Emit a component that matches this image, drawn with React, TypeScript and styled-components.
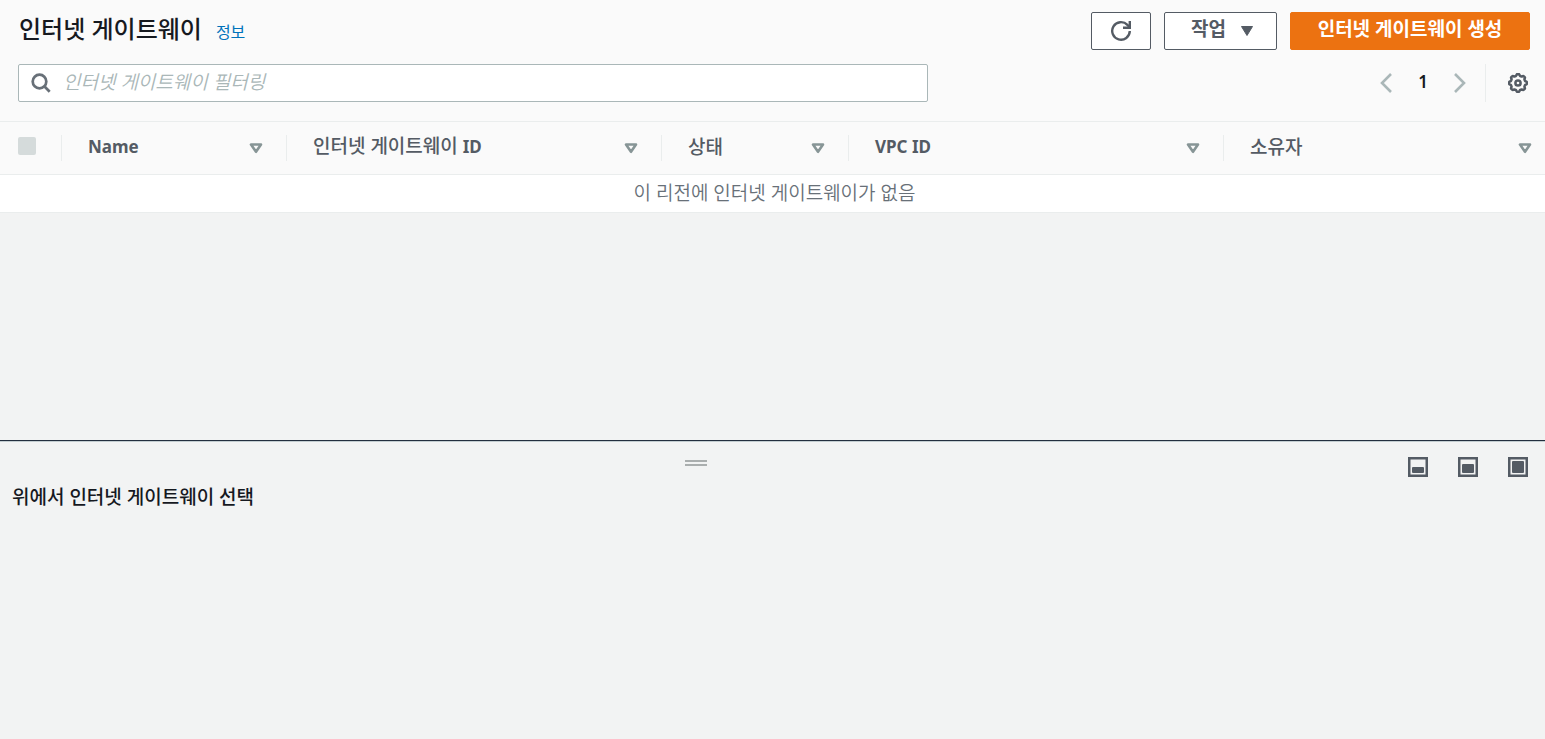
import React from "react";
import styled, { createGlobalStyle } from "styled-components";

const GlobalStyle = createGlobalStyle`
  *, *::before, *::after { box-sizing: border-box; }
  body {
    margin: 0;
    background: #f2f3f3;
    color: #16191f;
    font-family: "Noto Sans", "Noto Sans CJK KR", sans-serif;
    font-size: 19px;
    line-height: 24px;
  }
  button, input { font: inherit; color: inherit; }
`;

const Page = styled.div`
  display: flex;
  flex-direction: column;
  min-height: 100vh;
`;

const ListPane = styled.main`
  flex: 1;
`;

const ListHeader = styled.header`
  display: flex;
  flex-direction: column;
  gap: 14px;
  padding: 12px 15px 19px 18px;
  background: #fafafa;
`;

const HeaderRow = styled.div`
  display: flex;
  justify-content: space-between;
  height: 38px;
`;

const TitleGroup = styled.div`
  display: flex;
  align-items: baseline;
  gap: 14px;
  padding-left: 1px;
`;

const Title = styled.h1`
  margin: 0;
  font-size: 24px;
  line-height: 34px;
  font-weight: 500;
`;

const InfoLink = styled.a`
  color: #0073bb;
  font-size: 16px;
  text-decoration: none;
`;

const Actions = styled.div`
  display: flex;
  gap: 13px;
`;

const Button = styled.button<{ $primary?: boolean; $width: number }>`
  display: flex;
  align-items: center;
  justify-content: center;
  gap: 14px;
  width: ${(p) => p.$width}px;
  height: 38px;
  padding: 0;
  border: 1px solid ${(p) => (p.$primary ? "#ec7211" : "#545b64")};
  border-radius: 2px;
  background: ${(p) => (p.$primary ? "#ec7211" : "#fff")};
  color: ${(p) => (p.$primary ? "#fff" : "#545b64")};
  font-weight: 700;
`;

const ButtonText = styled.span`
  padding-bottom: 4px;
`;

const MenuButton = styled(Button)`
  padding-left: 4px;
`;

const SearchBox = styled.label`
  display: flex;
  align-items: center;
  gap: 12px;
  flex: 0 1 910px;
  min-width: 0;
  padding: 0 12px;
  border: 1px solid #aab7b8;
  border-radius: 2px;
  background: #fff;
  color: #687078;
`;

const SearchInput = styled.input`
  flex: 1;
  min-width: 0;
  padding: 0 0 3px;
  border: 0;
  outline: 0;
  background: transparent;
  &::placeholder {
    color: #aab7b8;
    font-style: italic;
    font-weight: 350;
    opacity: 1;
  }
`;

const Pagination = styled.nav`
  display: flex;
  align-items: center;
  padding-right: 2px;
`;

const IconButton = styled.button`
  display: flex;
  padding: 0;
  border: 0;
  background: none;
  color: #545b64;
  &:disabled { color: #aab7b8; }
`;

const PageNumber = styled.button`
  width: 62px;
  padding: 0 0 2px;
  border: 0;
  background: none;
  font-size: 17px;
  font-weight: 600;
`;

const Settings = styled.div`
  display: flex;
  align-items: center;
  height: 38px;
  margin-left: 19px;
  padding-left: 22px;
  border-left: 1px solid #eaeded;
`;

const Table = styled.table`
  width: 100%;
  table-layout: fixed;
  border-collapse: separate;
  border-spacing: 0;
`;

const HeadCell = styled.th<{ $width?: number }>`
  width: ${(p) => (p.$width ? `${p.$width}px` : "auto")};
  height: 54px;
  padding: 0;
  border-top: 1px solid #eaeded;
  border-bottom: 1px solid #eaeded;
  background: #fafafa;
  color: #545b64;
  text-align: left;
`;

const HeadContent = styled.div<{ $last?: boolean }>`
  display: flex;
  align-items: center;
  justify-content: space-between;
  height: 26px;
  padding: 0 ${(p) => (p.$last ? 13 : 23)}px 0 26px;
  border-right: ${(p) => (p.$last ? "0" : "1px solid #eaeded")};
`;

const SelectContent = styled.div`
  display: flex;
  align-items: center;
  height: 26px;
  padding-left: 18px;
  border-right: 1px solid #eaeded;
`;

const Checkbox = styled.input`
  appearance: none;
  width: 18px;
  height: 18px;
  margin: 0 0 4px;
  border-radius: 2px;
  background: #d5dbdb;
`;

const HeadLabel = styled.span`
  padding-bottom: 3px;
  font-weight: 500;
`;

const Latin = styled.span`
  font-size: 17px;
  font-weight: 700;
`;

const EmptyCell = styled.td`
  height: 38px;
  padding: 0 0 2px 4px;
  border-bottom: 1px solid #eaeded;
  background: #fff;
  color: #687078;
  font-weight: 350;
  text-align: center;
`;

const DetailPane = styled.section`
  height: 299px;
  border-top: 1px solid #232f3e;
  box-shadow: inset 0 1px 0 #c3cdd0;
`;

const DetailBar = styled.div`
  display: grid;
  grid-template-columns: 1fr auto 1fr;
  padding: 16px 17px 0 12px;
`;

const DragHandle = styled.div`
  width: 22px;
  height: 6px;
  margin: 3px 148px 0 0;
  border-top: 2px solid #aaaeae;
  border-bottom: 2px solid #aaaeae;
`;

const LayoutButtons = styled.div`
  display: flex;
  grid-column: 3;
  justify-content: flex-end;
  gap: 30px;
`;

const DetailTitle = styled.h2`
  margin: 8px 12px;
  font-size: 19px;
  line-height: 24px;
  font-weight: 500;
`;

const SortIcon = () => (
  <svg width="14" height="12" viewBox="0 0 14 12" aria-hidden="true">
    <path d="M2 2.5h10L7 9.8Z" fill="none" stroke="#879596" strokeWidth="2.6" strokeLinejoin="round" />
  </svg>
);

const Chevron = ({ next }: { next?: boolean }) => (
  <svg width="12" height="20" viewBox="0 0 12 20" fill="none" stroke="currentColor" strokeWidth="2.6">
    <path d={next ? "M1 1l9 9-9 9" : "M11 1l-9 9 9 9"} />
  </svg>
);

const LayoutIcon = ({ fill }: { fill: number }) => (
  <svg width="20" height="20" viewBox="0 0 20 20">
    <rect x="1.25" y="1.25" width="17.5" height="17.5" fill="none" stroke="currentColor" strokeWidth="2.5" />
    <rect x="4" y={16 - fill} width="12" height={fill} rx="1" fill="currentColor" />
  </svg>
);

const gearPoints = Array.from({ length: 96 }, (_, i) => {
  const angle = (i / 96) * Math.PI * 2;
  const radius = 8.1 + 0.8 * Math.tanh(2.5 * Math.cos(8 * angle));
  return `${(10 + radius * Math.sin(angle)).toFixed(2)},${(10 - radius * Math.cos(angle)).toFixed(2)}`;
}).join(" ");

const GearIcon = () => (
  <svg width="20" height="20" viewBox="0 0 20 20" fill="none" stroke="currentColor" strokeWidth="2.5" strokeLinejoin="round">
    <polygon points={gearPoints} />
    <circle cx="10" cy="10" r="2.6" />
  </svg>
);

const columns: { label: React.ReactNode; key: string; width?: number }[] = [
  { key: "name", label: <Latin>Name</Latin>, width: 225 },
  { key: "id", label: <>인터넷 게이트웨이 <Latin>ID</Latin></>, width: 375 },
  { key: "state", label: "상태", width: 187 },
  { key: "vpc", label: <Latin>VPC ID</Latin>, width: 375 },
  { key: "owner", label: "소유자" },
];

export default function App() {
  return (
    <Page>
      <GlobalStyle />
      <ListPane>
        <ListHeader>
          <HeaderRow>
            <TitleGroup>
              <Title>인터넷 게이트웨이</Title>
              <InfoLink href="#info">정보</InfoLink>
            </TitleGroup>
            <Actions>
              <Button $width={60} aria-label="새로 고침">
                <svg width="22" height="22" viewBox="0 0 22 22" fill="none" stroke="currentColor" strokeWidth="2.4">
                  <path d="M19.8 11a8.8 8.8 0 1 1-2.4-6.1l2.2 2.2" />
                  <path d="M19.8 1v6.8H13" />
                </svg>
              </Button>
              <MenuButton $width={113}>
                <ButtonText>작업</ButtonText>
                <svg width="14" height="12" viewBox="0 0 14 12" aria-hidden="true">
                  <path d="M1.5 1.5h11L7 10.5Z" fill="currentColor" stroke="currentColor" strokeLinejoin="round" />
                </svg>
              </MenuButton>
              <Button $primary $width={240}>
                <ButtonText>인터넷 게이트웨이 생성</ButtonText>
              </Button>
            </Actions>
          </HeaderRow>
          <HeaderRow>
            <SearchBox>
              <svg width="20" height="20" viewBox="0 0 20 20" fill="none" stroke="currentColor" strokeWidth="2.7" aria-hidden="true">
                <circle cx="8.5" cy="8.5" r="6.8" />
                <path d="M13.3 13.3l5.4 5.4" />
              </svg>
              <SearchInput type="text" aria-label="인터넷 게이트웨이 필터링" placeholder="인터넷 게이트웨이 필터링" />
            </SearchBox>
            <Pagination aria-label="페이지">
              <IconButton disabled aria-label="이전 페이지"><Chevron /></IconButton>
              <PageNumber>1</PageNumber>
              <IconButton disabled aria-label="다음 페이지"><Chevron next /></IconButton>
              <Settings>
                <IconButton aria-label="기본 설정"><GearIcon /></IconButton>
              </Settings>
            </Pagination>
          </HeaderRow>
        </ListHeader>
        <Table>
          <thead>
            <tr>
              <HeadCell $width={62}>
                <SelectContent>
                  <Checkbox type="checkbox" disabled aria-label="모두 선택" />
                </SelectContent>
              </HeadCell>
              {columns.map((column) => (
                <HeadCell key={column.key} $width={column.width} scope="col">
                  <HeadContent $last={!column.width}>
                    <HeadLabel>{column.label}</HeadLabel>
                    <SortIcon />
                  </HeadContent>
                </HeadCell>
              ))}
            </tr>
          </thead>
          <tbody>
            <tr>
              <EmptyCell colSpan={6}>이 리전에 인터넷 게이트웨이가 없음</EmptyCell>
            </tr>
          </tbody>
        </Table>
      </ListPane>
      <DetailPane>
        <DetailBar>
          <span />
          <DragHandle />
          <LayoutButtons>
            <IconButton aria-label="작은 패널"><LayoutIcon fill={6} /></IconButton>
            <IconButton aria-label="중간 패널"><LayoutIcon fill={9} /></IconButton>
            <IconButton aria-label="전체 패널"><LayoutIcon fill={12} /></IconButton>
          </LayoutButtons>
        </DetailBar>
        <DetailTitle>위에서 인터넷 게이트웨이 선택</DetailTitle>
      </DetailPane>
    </Page>
  );
}
